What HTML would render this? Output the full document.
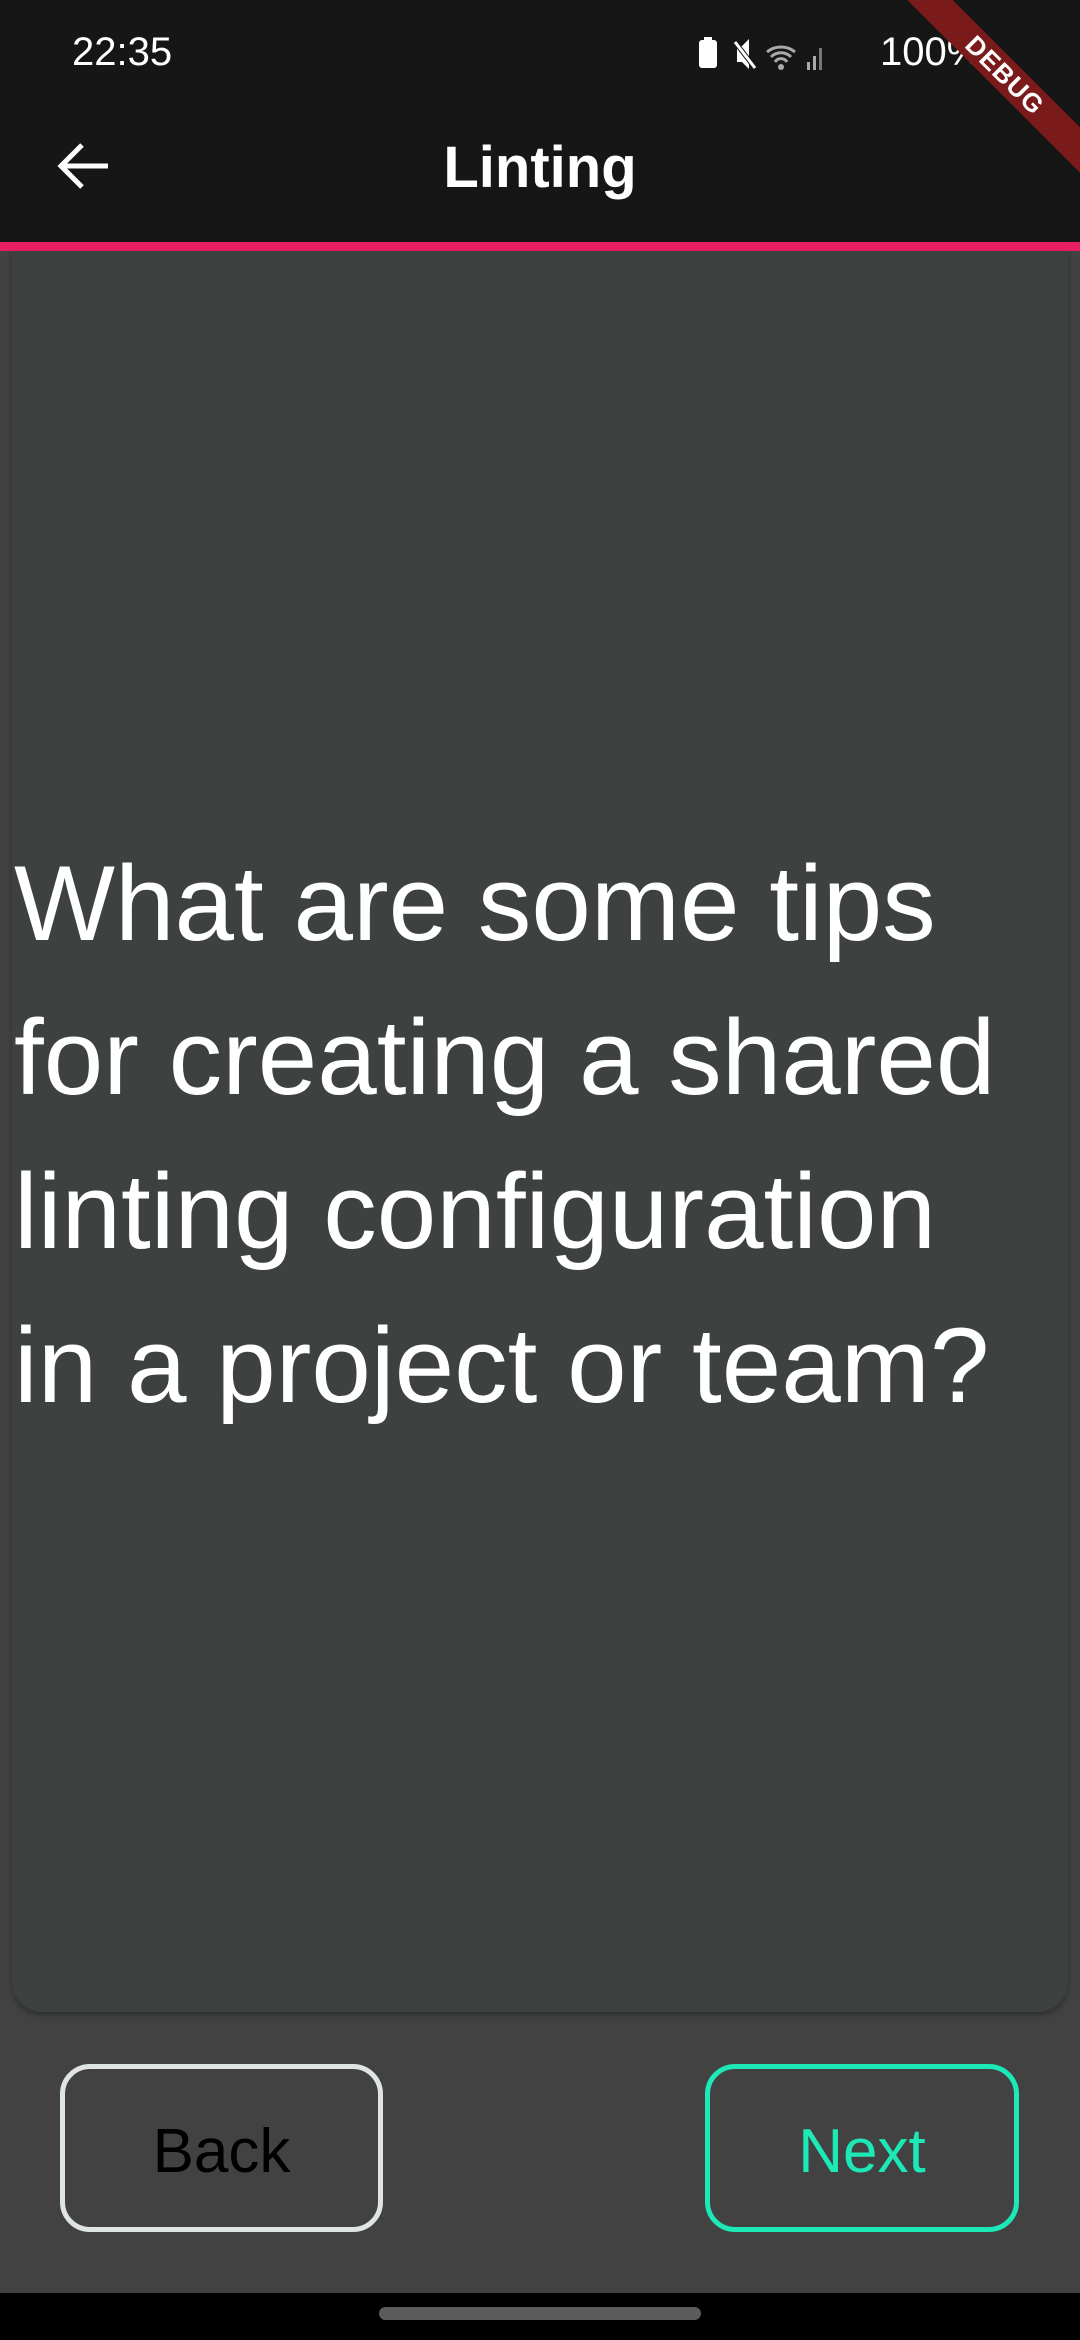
<!DOCTYPE html>
<html><head><meta charset="utf-8"><style>
*{margin:0;padding:0;box-sizing:border-box}
html,body{width:1080px;height:2340px;overflow:hidden;background:#424242;font-family:"Liberation Sans",Roboto,sans-serif}
.top{position:absolute;left:0;top:0;width:1080px;height:242px;background:#161616}
.pink{position:absolute;left:0;top:242px;width:1080px;height:9px;background:#e91e63}
.time{position:absolute;left:72px;top:30px;font-size:40px;color:#fff}
.title{position:absolute;left:0;width:1080px;top:134px;text-align:center;font-size:58px;font-weight:bold;color:#fff}
.card{position:absolute;left:12px;top:251px;width:1056px;height:1761px;background:#3d4240;border-radius:0 0 30px 30px;box-shadow:0 3px 6px rgba(0,0,0,.3)}
.q{position:absolute;left:14px;top:826px;font-size:107px;line-height:154px;color:#fff;white-space:nowrap}
.btn{position:absolute;top:2064px;height:168px;border:5px solid #dfe6e2;border-radius:30px;display:flex;align-items:center;justify-content:center;font-size:62px;padding-top:6px}
.nav{position:absolute;left:0;top:2293px;width:1080px;height:47px;background:#000}
.handle{position:absolute;left:379px;top:2307px;width:322px;height:13px;border-radius:7px;background:#5b5b5b}
.debug{position:absolute;left:805px;top:59px;width:400px;height:32px;background:#7b1a1a;transform:rotate(45deg);color:#fff;font-weight:bold;font-size:26px;text-align:center;line-height:32px;letter-spacing:1px}
.st{position:absolute;top:30px;font-size:40px;color:#fff}
</style></head><body>
<div class="top"></div>
<div class="time">22:35</div>
<svg style="position:absolute;left:697px;top:36px" width="130" height="36" viewBox="0 0 130 36">
<rect x="2" y="4" width="18" height="28" rx="3" fill="#fff"/><rect x="7" y="1" width="8" height="4" fill="#fff"/>
<path d="M40 10h5l7-7v30l-7-7h-5z" fill="#fff"/><path d="M38 6l20 26" stroke="#161616" stroke-width="5"/><path d="M38 6l20 26" stroke="#fff" stroke-width="3"/>
<path d="M70 16a22 22 0 0 1 28 0M74 21a14 14 0 0 1 20 0M78 26a7 7 0 0 1 12 0" stroke="#aaa" stroke-width="3" fill="none"/><circle cx="84" cy="31" r="3" fill="#aaa"/>
<rect x="110" y="26" width="3" height="8" fill="#aaa"/><rect x="116" y="20" width="3" height="14" fill="#aaa"/><rect x="122" y="12" width="3" height="22" fill="#777"/>
</svg>
<div class="st" style="left:880px">100%</div>
<div class="debug">DEBUG</div>
<svg style="position:absolute;left:56px;top:141px" width="56" height="50" viewBox="0 0 56 50"><path d="M52 25H6M26 4L5 25l21 21" stroke="#fff" stroke-width="5" fill="none"/></svg>
<div class="title">Linting</div>
<div class="pink"></div>
<div class="card"></div>
<div class="q">What are some tips<br>for creating a shared<br>linting configuration<br>in a project or team?</div>
<div class="btn" style="left:60px;width:323px;color:#000">Back</div>
<div class="btn" style="left:705px;width:314px;border-color:#1de9b6;color:#1de9b6">Next</div>
<div class="nav"></div>
<div class="handle"></div>
</body></html>
